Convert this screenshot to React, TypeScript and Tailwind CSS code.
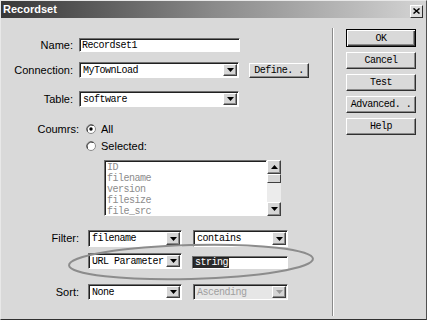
import React from "react";

const LABEL = { fontFamily: "'Liberation Sans Narrow','Liberation Sans',Arial,sans-serif" };
const MONO = { fontFamily: "'Liberation Mono','Courier New',monospace" };

function Tri({ up = false, color = "#000" }: { up?: boolean; color?: string }) {
  return (
    <svg width="7" height="4" viewBox="0 0 7 4">
      {up ? <polygon points="0,4 7,4 3.5,0" fill={color} /> : <polygon points="0,0 7,0 3.5,4" fill={color} />}
    </svg>
  );
}

function ArrowBtn({ disabled = false, up = false }: { disabled?: boolean; up?: boolean }) {
  return (
    <div className="w-[14px] h-full flex items-center justify-center bg-[#d6d6d6] border border-t-white border-l-white border-r-[#404040] border-b-[#404040] shadow-[inset_-1px_-1px_0_#8a8a8a]">
      <Tri up={up} color={disabled ? "#9a9a9a" : "#000"} />
    </div>
  );
}

function Sunken({ className = "", children }: { className?: string; children?: React.ReactNode }) {
  return (
    <div className={"border border-t-[#707070] border-l-[#707070] border-r-white border-b-white shadow-[inset_1px_1px_0_#202020] " + className}>
      {children}
    </div>
  );
}

function Select({ w, h, value, disabled = false }: { w: string; h: string; value: string; disabled?: boolean }) {
  return (
    <Sunken className={`${w} ${h} flex items-stretch p-[1px] ${disabled ? "bg-[#e6e6e6]" : "bg-white"}`}>
      <div
        className={`flex-1 flex items-center pl-[2px] text-[10px] tracking-[-0.5px] ${disabled ? "text-[#a0a0a0]" : "text-black"}`}
        style={MONO}
      >
        {value}
      </div>
      <ArrowBtn disabled={disabled} />
    </Sunken>
  );
}

function Button({ label, def = false, className = "" }: { label: string; def?: boolean; className?: string }) {
  return (
    <div
      className={
        "flex items-center justify-center bg-[#d9d9d9] text-[10px] tracking-[-0.5px] text-black " +
        (def
          ? "border border-black shadow-[inset_1px_1px_0_#fff,inset_-1px_-1px_0_#404040,inset_-2px_-2px_0_#8a8a8a] "
          : "border border-t-white border-l-white border-r-[#303030] border-b-[#303030] shadow-[inset_-1px_-1px_0_#8a8a8a] ") +
        className
      }
      style={MONO}
    >
      {label}
    </div>
  );
}

function Radio({ checked }: { checked: boolean }) {
  return (
    <svg width="10" height="10" viewBox="0 0 10 10">
      <circle cx="5" cy="5" r="4.5" fill="#fff" stroke="#8a8a8a" />
      <path d="M1.5 7.5 A4.5 4.5 0 0 1 7.5 1.5" fill="none" stroke="#303030" />
      {checked && <circle cx="5" cy="5" r="1.7" fill="#000" />}
    </svg>
  );
}

export default function App() {
  return (
    <div className="relative w-[427px] h-[320px] bg-[#d9d9d9] border border-t-[#e8e8e8] border-l-[#e8e8e8] border-r-[#505050] border-b-[#303030] overflow-hidden flex flex-col">
      {/* Title bar */}
      <div className="h-[17px] flex items-center justify-between pl-[2px] pr-[3px] bg-gradient-to-r from-[#383838] via-[#8a8a8a] to-[#d4d4d4]">
        <span className="text-white font-bold text-[11px] leading-none" style={LABEL}>
          Recordset
        </span>
        <div className="w-[13px] h-[13px] mt-[3px] bg-[#dcdcdc] border border-t-white border-l-white border-r-[#303030] border-b-[#303030] flex items-center justify-center">
          <svg width="7" height="6" viewBox="0 0 7 6">
            <path d="M0.5 0.5 L6.5 5.5 M6.5 0.5 L0.5 5.5" stroke="#000" strokeWidth="1.5" />
          </svg>
        </div>
      </div>

      <div className="flex flex-1 pt-[10px] pb-[3px]">
        {/* Left panel */}
        <div className="w-[332px] border-r border-r-[#8a8a8a] shadow-[1px_0_0_#fff] flex flex-col text-black text-[11px]" style={LABEL}>
          <div className="flex items-center h-[14px] mt-[10px]">
            <div className="w-[72px] text-right">Name:</div>
            <Sunken className="ml-[6px] w-[161px] h-[14px] bg-white flex items-center pl-[2px]">
              <span className="text-[10px] tracking-[-0.5px]" style={MONO}>Recordset1</span>
            </Sunken>
          </div>

          <div className="flex items-center h-[16px] mt-[10px]">
            <div className="w-[72px] text-right">Connection:</div>
            <div className="ml-[6px]">
              <Select w="w-[160px]" h="h-[16px]" value="MyTownLoad" />
            </div>
            <Button label="Define. ." className="ml-[10px] w-[60px] h-[15px]" />
          </div>

          <div className="flex items-center h-[16px] mt-[13px]">
            <div className="w-[72px] text-right">Table:</div>
            <div className="ml-[6px]">
              <Select w="w-[160px]" h="h-[16px]" value="software" />
            </div>
          </div>

          <div className="flex items-center h-[10px] mt-[17px]">
            <div className="w-[78px] text-right">Coumrs:</div>
            <div className="ml-[7px] flex items-center">
              <Radio checked />
            </div>
            <span className="ml-[5px]">All</span>
          </div>
          <div className="flex items-center h-[10px] mt-[7px]">
            <div className="ml-[85px] flex items-center">
              <Radio checked={false} />
            </div>
            <span className="ml-[5px]">Selected:</span>
          </div>

          <div className="ml-[103px] mt-[9px] w-[177px] h-[56px] flex">
            <Sunken className="flex-1 bg-white pl-[2px] pt-[1px]">
              <div className="text-[10px] tracking-[-0.5px] leading-[11px] text-[#8c8c8c]" style={MONO}>
                <div>ID</div>
                <div>filename</div>
                <div>version</div>
                <div>filesize</div>
                <div>file_src</div>
              </div>
            </Sunken>
            <div className="w-[14px] flex flex-col">
              <div className="h-[14px]"><ArrowBtn up /></div>
              <div className="h-[9px] bg-[#d6d6d6] border border-t-white border-l-white border-r-[#404040] border-b-[#404040]" />
              <div className="flex-1 bg-[#ececec]" />
              <div className="h-[14px]"><ArrowBtn /></div>
            </div>
          </div>

          <div className="flex items-center h-[17px] mt-[14px]">
            <div className="w-[78px] text-right">Filter:</div>
            <div className="ml-[9px]">
              <Select w="w-[94px]" h="h-[17px]" value="filename" />
            </div>
            <div className="ml-[11px]">
              <Select w="w-[95px]" h="h-[17px]" value="contains" />
            </div>
          </div>

          <div className="flex items-start h-[16px] mt-[6px]">
            <div className="ml-[87px]">
              <Select w="w-[94px]" h="h-[16px]" value="URL Parameter" />
            </div>
            <Sunken className="ml-[10px] mt-[3px] w-[96px] h-[13px] bg-white flex items-center pl-[1px]">
              <span className="bg-[#2a2a2a] text-white text-[10px] tracking-[-0.5px] leading-[10px] px-[1px]" style={MONO}>
                string
              </span>
            </Sunken>
          </div>

          <div className="flex items-center h-[16px] mt-[15px]">
            <div className="w-[78px] text-right">Sort:</div>
            <div className="ml-[9px]">
              <Select w="w-[94px]" h="h-[16px]" value="None" />
            </div>
            <div className="ml-[11px]">
              <Select w="w-[95px]" h="h-[16px]" value="Ascending" disabled />
            </div>
          </div>
        </div>

        {/* Right panel */}
        <div className="flex flex-col gap-[5px] pl-[13px] pt-[1px]">
          <Button label="OK" def className="w-[70px] h-[18px]" />
          <Button label="Cancel" className="w-[70px] h-[17px]" />
          <Button label="Test" className="w-[70px] h-[17px]" />
          <Button label="Advanced. ." className="w-[70px] h-[17px]" />
          <Button label="Help" className="w-[70px] h-[17px]" />
        </div>
      </div>

      {/* annotation ellipse */}
      <svg className="absolute left-[64px] top-[240px] pointer-events-none" width="252" height="42" viewBox="0 0 252 42">
        <ellipse cx="126" cy="21" rx="122" ry="17" fill="none" stroke="#8c8c8c" strokeWidth="2" transform="rotate(-1.5 126 21)" />
      </svg>
    </div>
  );
}
